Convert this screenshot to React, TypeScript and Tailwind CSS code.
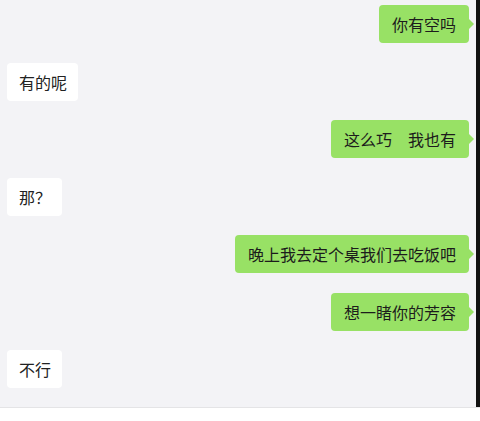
import React from "react";

type Msg = { side: "left" | "right"; text: string };

const messages: Msg[] = [
    { side: "right", text: "你有空吗" },
    { side: "left", text: "有的呢" },
    { side: "right", text: "这么巧\u3000我也有" },
    { side: "left", text: "那？" },
    { side: "right", text: "晚上我去定个桌我们去吃饭吧" },
    { side: "right", text: "想一睹你的芳容" },
    { side: "left", text: "不行" },
];

function Bubble({ side, text }: Msg) {
    if (side === "right") {
        return (
            <div className="flex justify-end pr-[7px]">
                <div className="relative h-[38px] flex items-center px-[13px] rounded-[4px] bg-[#98e165] text-[#1c1c1c]">
                    {text}
                    <span className="absolute right-[-5px] top-1/2 -translate-y-1/2 w-0 h-0 border-y-[5px] border-y-transparent border-l-[5px] border-l-[#98e165]" />
                </div>
            </div>
        );
    }
    return (
        <div className="flex justify-start pl-[7px]">
            <div className="h-[38px] flex items-center pl-[12px] pr-[11px] rounded-[4px] bg-white text-[#222]">
                {text}
            </div>
        </div>
    );
}

export default function App() {
    return (
        <div
            className="w-[480px] h-[421px] flex flex-col bg-white text-[16px] leading-none"
            style={{ fontFamily: '"Noto Sans CJK SC", "Noto Sans", sans-serif' }}
        >
            <div className="flex flex-row h-[407px]">
                <div className="flex-1 bg-[#f3f3f6] pt-[5px] flex flex-col gap-[19.5px]">
                    {messages.map((m, i) => (
                        <Bubble key={i} side={m.side} text={m.text} />
                    ))}
                </div>
                <div className="w-[4px] bg-[#111]" />
            </div>
            <div className="h-[1px] bg-[#e4e4e6]" />
            <div className="flex-1 bg-white" />
        </div>
    );
}
